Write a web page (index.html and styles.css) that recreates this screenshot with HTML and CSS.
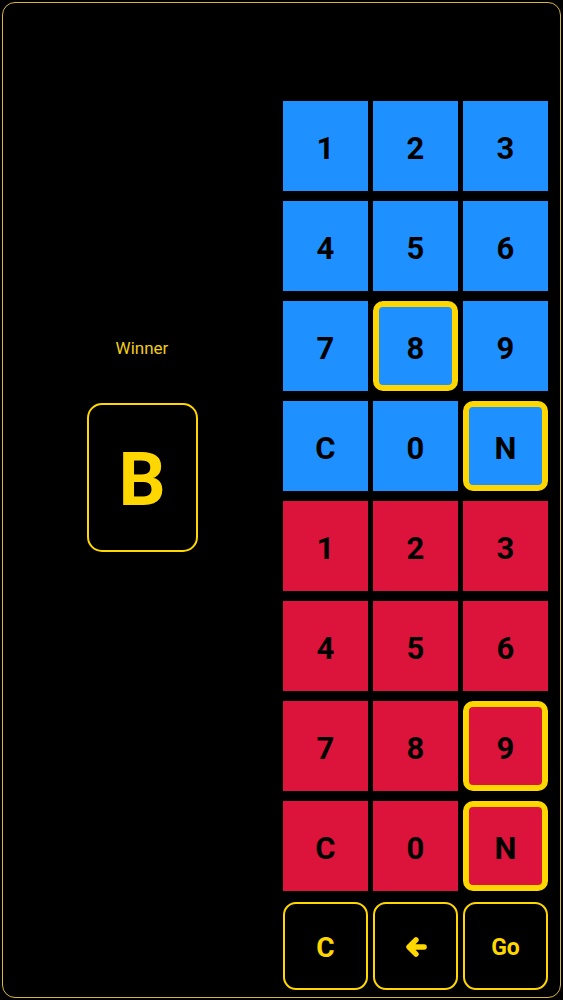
FILE: index.html
```html
<!DOCTYPE html>
<html>
<head>
<meta charset="utf-8">
<link rel="stylesheet" href="styles.css">
</head>
<body>
<div class="frame">
  <div class="side">
    <div class="winner-label">Winner</div>
    <div class="winner-box">B</div>
  </div>
  <div class="pad">
    <div class="grid">
      <div class="cell blue">1</div>
      <div class="cell blue">2</div>
      <div class="cell blue">3</div>
      <div class="cell blue">4</div>
      <div class="cell blue">5</div>
      <div class="cell blue">6</div>
      <div class="cell blue">7</div>
      <div class="cell blue sel">8</div>
      <div class="cell blue">9</div>
      <div class="cell blue">C</div>
      <div class="cell blue">0</div>
      <div class="cell blue sel">N</div>
      <div class="cell red">1</div>
      <div class="cell red">2</div>
      <div class="cell red">3</div>
      <div class="cell red">4</div>
      <div class="cell red">5</div>
      <div class="cell red">6</div>
      <div class="cell red">7</div>
      <div class="cell red">8</div>
      <div class="cell red sel">9</div>
      <div class="cell red">C</div>
      <div class="cell red">0</div>
      <div class="cell red sel">N</div>
    </div>
    <div class="actions">
      <div class="btn btn-c">C</div>
      <div class="btn">
        <svg width="26" height="26" viewBox="0 0 24 24"><path d="M19.5 12 H6.5 M12 5.5 L5.5 12 L12 18.5" fill="none" stroke="#ffd700" stroke-width="5" stroke-linecap="round" stroke-linejoin="round"/></svg>
      </div>
      <div class="btn btn-go">Go</div>
    </div>
  </div>
</div>
</body>
</html>
```

FILE: styles.css
```css
html, body {
  margin: 0;
  padding: 0;
  background: #000;
}
body {
  font-family: Roboto, "Liberation Sans", sans-serif;
}
.frame {
  box-sizing: border-box;
  margin: 2px;
  width: 559px;
  height: 996px;
  border: 1.5px solid #d6b73e;
  border-radius: 13px;
  display: flex;
}
.side {
  flex: 1;
  display: flex;
  flex-direction: column;
  align-items: center;
  padding-top: 334px;
  padding-right: 2px;
}
.winner-label {
  color: #f0cc1a;
  font-size: 17px;
  line-height: 22px;
}
.winner-box {
  margin-top: 44px;
  box-sizing: border-box;
  width: 111px;
  height: 149px;
  padding-top: 4px;
  border: 2.5px solid #ffd700;
  border-radius: 15px;
  display: flex;
  align-items: center;
  justify-content: center;
  color: #ffd700;
  font-weight: 700;
  font-size: 74px;
}
.pad {
  width: 265px;
  margin-right: 12px;
  padding-top: 97.5px;
}
.grid {
  display: grid;
  grid-template-columns: repeat(3, 85px);
  grid-auto-rows: 90px;
  column-gap: 5px;
  row-gap: 10px;
}
.cell {
  box-sizing: border-box;
  padding-top: 5px;
  display: flex;
  align-items: center;
  justify-content: center;
  font-size: 31px;
  font-weight: 700;
  color: #000;
}
.blue { background: #1e90ff; }
.red { background: #dc143c; }
.sel {
  border: 6px solid #ffd700;
  border-radius: 10px;
  padding-top: 5px;
}
.actions {
  margin-top: 11px;
  display: grid;
  grid-template-columns: repeat(3, 85px);
  column-gap: 5px;
}
.btn {
  box-sizing: border-box;
  height: 88px;
  padding-top: 3px;
  border: 2.5px solid #ffd700;
  border-radius: 13px;
  display: flex;
  align-items: center;
  justify-content: center;
  color: #ffd700;
  font-weight: 700;
}
.btn-c { font-size: 28px; }
.btn-go { font-size: 23px; }
```
